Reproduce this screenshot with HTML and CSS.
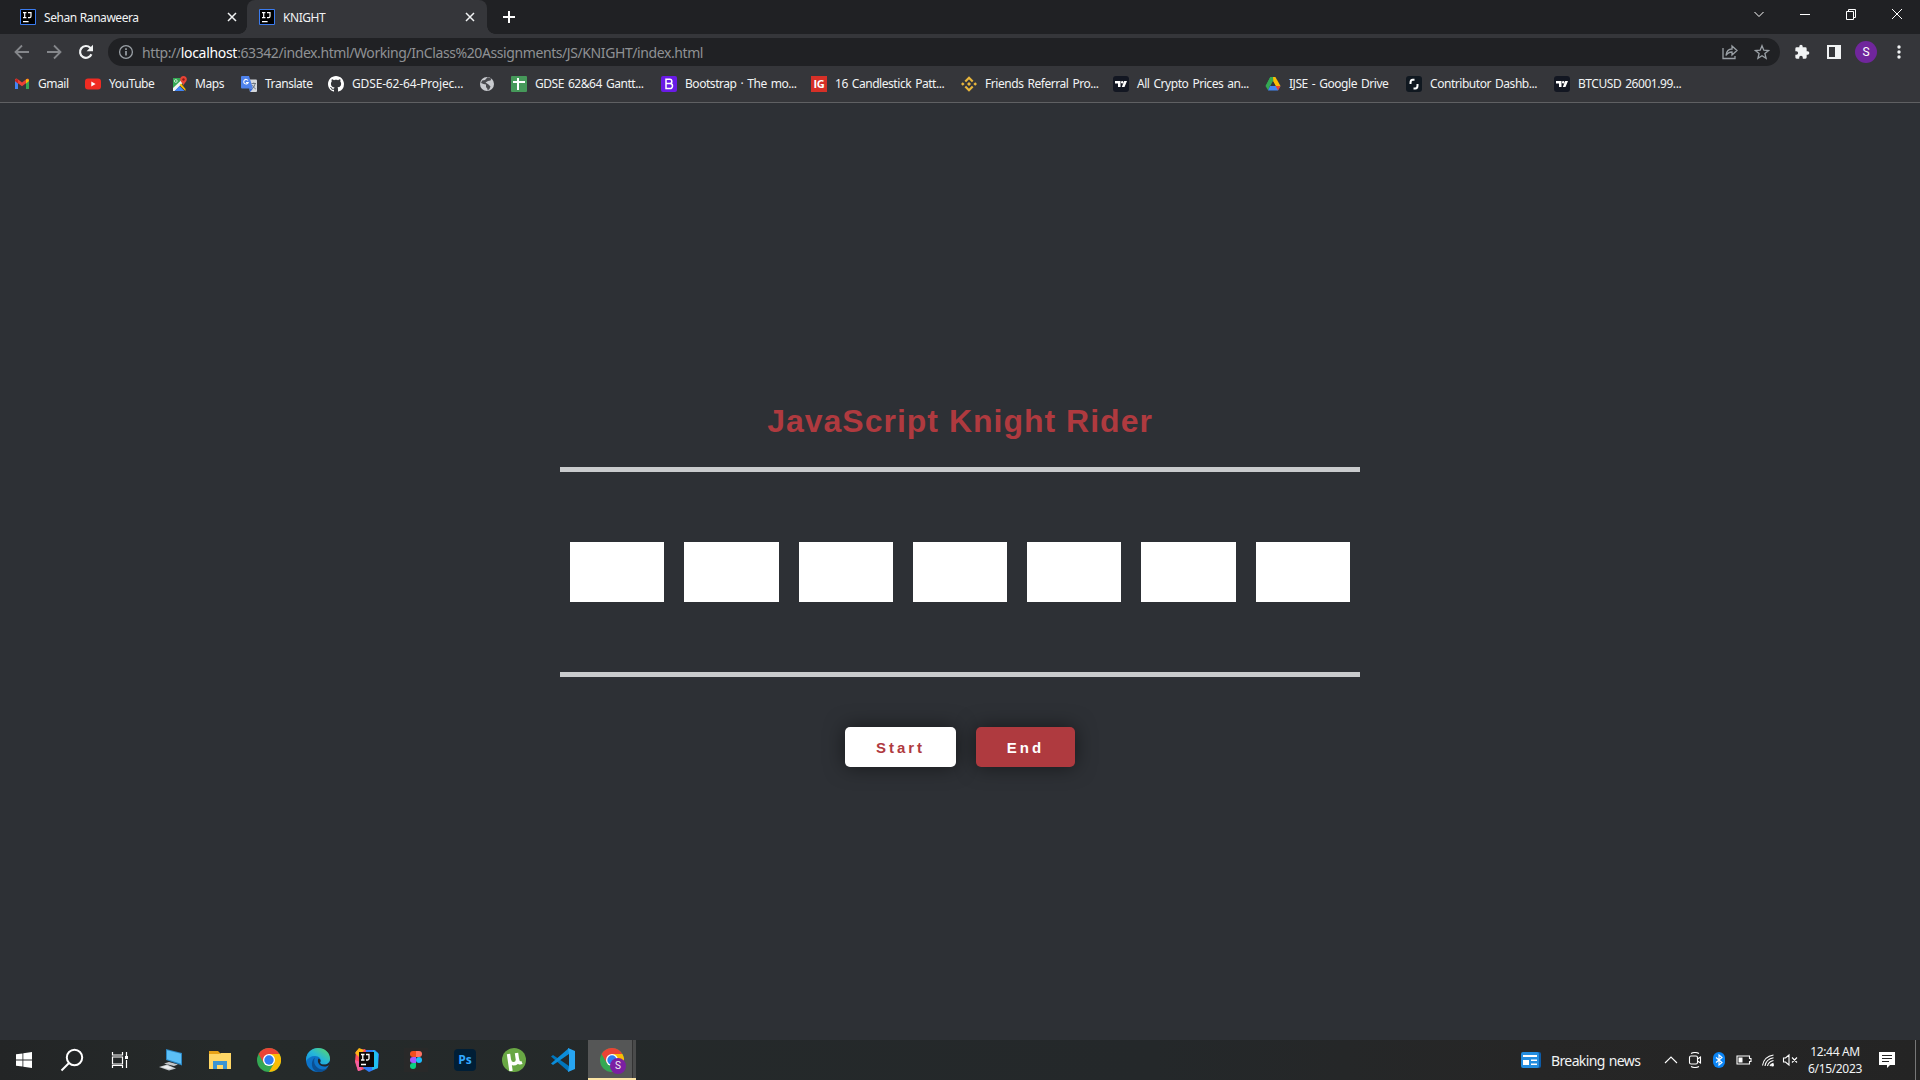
FILE: index.html
```html
<!DOCTYPE html>
<html lang="en">
<head>
<meta charset="utf-8">
<title>KNIGHT</title>
<link rel="stylesheet" href="styles.css">
</head>
<body>
<svg class="defs" width="0" height="0" aria-hidden="true">
  <symbol id="ij" viewBox="0 0 16 16"><path fill="#000" stroke="#3b7cf0" d="M.5.5h15v15H.5z"/><path fill="none" stroke="#fff" stroke-width="1.2" d="M3 3.6h3.4M4.700 3.600v5M3 8.600h3.400M8 3.600h3v3.600q0 1.400-1.400 1.400H8M3 12.600h5.600"/></symbol>
  <symbol id="x" viewBox="0 0 10 10"><path fill="none" stroke="#f1f3f4" stroke-width="1.5" d="M1 1l8 8M9 1L1 9"/></symbol>
  <symbol id="tv" viewBox="0 0 16 16"><rect width="16" height="16" rx="3" fill="#131722"/><path fill="#fff" d="M2 5h5.500v6H5V7.400H2zM11.200 5H14l-2.500 6H8.800z"/><circle cx="9.200" cy="6.200" r="1.200" fill="#fff"/></symbol>
  <symbol id="chrome" viewBox="0 0 24 24"><circle cx="12" cy="12" r="12" fill="#34a853"/><path fill="#ea4335" d="M1.600 6A12 12 0 0 1 22.400 6H12L6.800 15z"/><path fill="#fbbc05" d="M22.400 6A12 12 0 0 1 12 24l5.200-9L12 6z"/><circle cx="12" cy="12" r="6" fill="#fff"/><circle cx="12" cy="12" r="4.700" fill="#2f7cf0"/></symbol>
</svg>

<header class="browser">
  <div class="tabstrip">
    <div class="tab"><svg class="fav"><use href="#ij"/></svg><span class="tab-title">Sehan Ranaweera</span><svg class="tab-x"><use href="#x"/></svg></div>
    <div class="tab active"><svg class="fav"><use href="#ij"/></svg><span class="tab-title knight">KNIGHT</span><svg class="tab-x"><use href="#x"/></svg></div>
    <svg class="plus" viewBox="0 0 12 12"><path stroke="#fff" stroke-width="2" d="M6 0v12M0 6h12"/></svg>
    <div class="window">
      <svg viewBox="0 0 12 12"><path d="M1.500 4L6 8.500 10.500 4"/></svg>
      <svg viewBox="0 0 12 12"><path d="M1 6.500h10"/></svg>
      <svg viewBox="0 0 12 12"><path d="M1.500 3.500h7v8h-7zM3.500 3.500v-2h7v8h-2"/></svg>
      <svg viewBox="0 0 12 12"><path d="M1 1l10 10M11 1L1 11"/></svg>
    </div>
  </div>

  <div class="toolbar">
    <div class="nav">
      <svg class="dim" viewBox="0 0 16 16"><path d="M15 8H2M8 1.500L1.500 8 8 14.500"/></svg>
      <svg class="dim" viewBox="0 0 16 16"><path d="M1 8h13M8 1.500L14.500 8 8 14.500"/></svg>
      <svg viewBox="0 0 16 16"><path stroke-width="2.200" d="M13.400 10.200A5.900 5.900 0 1 1 12.200 3.800L14 5.600"/><path fill="#f1f3f4" stroke="none" d="M15 .8v6.400H8.600z"/></svg>
    </div>
    <div class="omnibox">
      <svg class="info" viewBox="0 0 16 16"><circle cx="8" cy="8" r="6.400"/><path stroke-width="1.700" d="M8 7v4.500M8 4.300V6"/></svg>
      <div class="url">http://<b>localhost</b>:63342/index.html/Working/InClass%20Assignments/JS/KNIGHT/index.html</div>
      <svg class="share" viewBox="0 0 16 16"><path d="M1 4v10.500h12V12M4 11.500C4.500 7 7 5 10 5V2L15 6.500 10 11V8C7.500 8 5.500 9 4 11.500z"/></svg>
      <svg class="star" viewBox="0 0 16 16"><path d="M8 1.700l1.800 4.500 4.800.3-3.700 3 1.200 4.800L8 11.700l-4.100 2.600 1.200-4.800-3.700-3 4.800-.3z"/></svg>
    </div>
    <div class="actions">
      <svg viewBox="0 0 24 24"><path fill="#f1f3f4" d="M20.500 11H19V7a2 2 0 0 0-2-2h-4V3.500a2.500 2.500 0 0 0-5 0V5H4a2 2 0 0 0-2 2v3.800h1.500a2.700 2.700 0 0 1 0 5.400H2V20a2 2 0 0 0 2 2h3.800v-1.500a2.700 2.700 0 0 1 5.400 0V22H17a2 2 0 0 0 2-2v-4h1.500a2.500 2.500 0 0 0 0-5z"/></svg>
      <svg viewBox="0 0 16 16"><path fill="#f1f3f4" fill-rule="evenodd" d="M1 1h14v14H1zM3 3v10h6V3z"/></svg>
      <span class="avatar">S</span>
      <svg viewBox="0 0 16 16"><g fill="#f1f3f4"><circle cx="8" cy="3" r="1.700"/><circle cx="8" cy="8" r="1.700"/><circle cx="8" cy="13" r="1.700"/></g></svg>
    </div>
  </div>

  <nav class="bookmarks">
    <a><svg viewBox="0 0 16 16"><path fill="#4285f4" d="M1 4v9h3V7z"/><path fill="#34a853" d="M15 4v9h-3V7z"/><path fill="#ea4335" d="M1 5V3.500Q2 2 3.500 3L8 6.500 12.500 3Q14 2 15 3.500V5l-7 5.200z"/><path fill="#fbbc04" d="M12 3.500L13 3q2 0 2 2l-3 2.500z"/><path fill="#c5221f" d="M4 3.500L3 3Q1 3 1 5l3 2.500z"/></svg><span>Gmail</span></a>
    <a><svg viewBox="0 0 16 16"><rect y="2.500" width="16" height="11" rx="3" fill="#f02b22"/><path fill="#fff" d="M6.300 5.500v5L10.600 8z"/></svg><span>YouTube</span></a>
    <a><svg viewBox="0 0 16 16"><path fill="#34a853" d="M2 2h8l2 6-10 7z"/><path fill="#f3f4f5" d="M2 12L10.500 4l1 3L4 15H2z"/><path fill="#fbbc04" d="M8.500 9.300l1.500-1.800L14.500 13v2z"/><path fill="#4285f4" d="M3.500 15l5-5 5 5z"/><path fill="#e94335" d="M12.500 0a3.300 3.300 0 0 1 3.300 3.600C15.800 6 13 7 12.500 10 12 7 9.200 6 9.200 3.600A3.300 3.300 0 0 1 12.500 0z"/><circle cx="12.500" cy="3.500" r="1.200" fill="#8b1a16"/><circle cx="4.800" cy="5" r="1.400" fill="none" stroke="#fff" stroke-width=".7"/></svg><span>Maps</span></a>
    <a><svg viewBox="0 0 16 16"><path fill="#d5d8dc" d="M7 3.500h8q1 0 1 1V15q0 1-1 1H9z"/><path fill="#4f83ed" d="M1 0h7l4 12.500H1q-1 0-1-1V1q0-1 1-1z"/><path fill="#3367d6" d="M8 12.500h4L9.300 16z"/><path fill="none" stroke="#fff" stroke-width="1.100" d="M7 4.500A2.300 2.300 0 1 0 7.200 6.500H5"/><path fill="none" stroke="#66717c" stroke-width=".9" d="M10.500 7.500H15M12.800 6.500v1M14.200 7.500Q13.500 11 11.500 12.500M11.500 9q1 3 3.300 4"/></svg><span>Translate</span></a>
    <a class="wide"><svg viewBox="0 0 16 16"><path fill="#fff" d="M8 0C3.580 0 0 3.580 0 8c0 3.540 2.290 6.530 5.470 7.590.4.070.55-.17.55-.38 0-.19-.01-.82-.01-1.490-2.010.37-2.530-.49-2.690-.94-.09-.23-.48-.94-.82-1.130-.28-.15-.68-.52-.01-.53.63-.01 1.080.58 1.230.82.72 1.210 1.870.87 2.330.66.07-.52.28-.87.51-1.070-1.780-.2-3.640-.89-3.640-3.950 0-.87.31-1.590.82-2.150-.08-.2-.36-1.020.08-2.120 0 0 .67-.21 2.200.82.64-.18 1.320-.27 2-.27s1.360.09 2 .27c1.530-1.040 2.200-.82 2.200-.82.44 1.100.16 1.920.08 2.120.51.56.82 1.270.82 2.150 0 3.070-1.870 3.750-3.650 3.950.29.25.54.73.54 1.480 0 1.070-.01 1.930-.01 2.200 0 .21.15.46.55.38A8.010 8.010 0 0 0 16 8c0-4.420-3.580-8-8-8z"/></svg><span>GDSE-62-64-Projec...</span></a>
    <a><svg viewBox="0 0 16 16"><circle cx="7" cy="8" r="7" fill="#c9cbcf"/><path fill="#4a4b4f" d="M7.500 1.200L5 4l-2.800.5L1 7l2.500 1 2.500.5V11l1.500 2V14.500l2-1.500 1-2.500-2-2L7 7.500 5.500 6.500 8 5l2.500-.5 1-2z"/></svg></a>
    <a><svg viewBox="0 0 16 16"><rect width="16" height="16" rx="1" fill="#46995a"/><path stroke="#fff" stroke-width="2" d="M2 6h12M7 2v12"/></svg><span>GDSE 62&amp;64 Gantt...</span></a>
    <a><svg viewBox="0 0 16 16"><rect width="16" height="16" rx="2" fill="#6a1be6"/><path fill="none" stroke="#fff" stroke-width="1.500" d="M5 3.300h3.700a2.100 2.100 0 0 1 0 4.300H5h4a2.500 2.500 0 0 1 0 5H5z"/></svg><span>Bootstrap · The mo...</span></a>
    <a><svg viewBox="0 0 16 16"><path fill="#d63027" d="M0 0h16v16H0z"/><text x="8" y="12" text-anchor="middle" class="ig">IG</text></svg><span>16 Candlestick Patt...</span></a>
    <a><svg viewBox="0 0 16 16"><g fill="none" stroke="#e9b63c" stroke-width="2.200"><path d="M4.300 5.500L8 1.800l3.700 3.700M4.300 10.500L8 14.200l3.700-3.700"/></g><path fill="#e9b63c" d="M8 6l2 2-2 2-2-2zM1.800 6.200L3.600 8 1.800 9.800 0 8zM14.200 6.200L16 8l-1.800 1.800L12.400 8z"/></svg><span>Friends Referral Pro...</span></a>
    <a><svg><use href="#tv"/></svg><span>All Crypto Prices an...</span></a>
    <a><svg viewBox="0 0 16 16"><path fill="#34a853" d="M5.300 1h2.800L3.200 14.500.5 10z"/><path fill="#fbbc04" d="M5.800 1h4.600l5.100 9h-4.800z"/><path fill="#34a853" d="M5.300 1H8l.3 3.500-3 5.500H.8z"/><path fill="#4285f4" d="M5 10h10.500L13 14.500H3z"/><path fill="#ea4335" d="M10.700 10h4.800L13 14.500z"/><path fill="#35363a" d="M8 5.500l2.500 4.500H5.500z"/></svg><span>IJSE - Google Drive</span></a>
    <a><svg viewBox="0 0 16 16"><rect width="16" height="16" rx="3" fill="#101820"/><path fill="none" stroke="#fff" stroke-width="2" d="M8.500 3.800H6.700Q4.500 3.800 4.500 7v1M7.500 12.500h1.800q2.200 0 2.200-3V8"/></svg><span>Contributor Dashb...</span></a>
    <a><svg><use href="#tv"/></svg><span>BTCUSD 26001.99...</span></a>
  </nav>
</header>

<main class="page">
  <h1>JavaScript Knight Rider</h1>
  <section class="lights">
    <div></div><div></div><div></div><div></div><div></div><div></div><div></div>
  </section>
  <div class="buttons"><button class="start">Start</button><button class="end">End</button></div>
</main>

<footer class="taskbar">
  <div class="system">
    <svg viewBox="0 0 24 24"><path fill="#fff" d="M4 6.300l6.500-.9v6.100H4zM11.300 5.300L20 4v7.500h-8.700zM4 12.400h6.500v6.200L4 17.700zM11.300 12.400H20V20l-8.700-1.200z"/></svg>
    <svg viewBox="0 0 24 24"><g fill="none" stroke="#fff" stroke-width="2"><circle cx="14.500" cy="9.500" r="7.700"/><path d="M9 15l-7.500 7.500"/></g></svg>
    <svg viewBox="0 0 24 24"><path fill="none" stroke="#fff" stroke-width="1.200" d="M4.500 4v3h10V4M4.500 9h10v7h-10zM4.500 20v-2.500h10V20M18.500 4v4M18.500 12v8"/><path fill="#fff" d="M17 8h3v3h-3z"/></svg>
  </div>
  <div class="apps">
    <span><svg viewBox="0 0 24 24"><path fill="#2c86c2" d="M7 1l16 4v12.500L7 12z"/><path fill="#5cc0f7" d="M8 2.300l14 3.500v10L8 11.200z"/><path fill="#c3c8cc" d="M5 15.500l5-1.500 9 2.500-4 1.500zM0 19l8-2.500 9 4-7 2z"/><path fill="#eceff1" d="M2 19l6-1.500 6 2.500-4.500 1z"/></svg></span>
    <span><svg viewBox="0 0 24 24"><path fill="#e8a317" d="M1 3h9l2 2v3H1z"/><path fill="#ffd766" d="M1 6h10l2-1h10v16H1z"/><path fill="#3a94d2" d="M5 13h14v8h-4v-4H9v4H5z"/></svg></span>
    <span><svg><use href="#chrome"/></svg></span>
    <span><svg viewBox="0 0 24 24"><defs><linearGradient id="eg" x1="0" y1="1" x2="1" y2="0"><stop stop-color="#108be0"/><stop offset=".5" stop-color="#26b7d8"/><stop offset="1" stop-color="#60dc5c"/></linearGradient></defs><circle cx="12" cy="12" r="12" fill="#0d73c8"/><path fill="url(#eg)" d="M0 11C1 4 6 0 12 0c7 0 12 5 12 10.500 0 4-3 6-6 6-3.500 0-4.500-1.500-3.500-3C15.500 11 13 8 9 8c-4 0-7 2-9 5z"/><path fill="#0b4f93" d="M9 9.500c-3 6 2 12 8 12 3 0 4.500-1 5.500-2.500C20 23 16 24 12 24 5 23 4 13 9 9.500z"/><path fill="#222529" d="M12.500 10.500c-2 3.500 1 8 6 8 2 0 3.500-.6 5-1.500l.5-4c-1.500 3-4 3.500-6 3.500-3.500 0-4.500-1.500-3.500-3 .5-1-.5-2.500-2-3z"/></svg></span>
    <span><svg viewBox="0 0 24 24"><path fill="#fc4d62" d="M1 3l9-2 4 6-4 14-7 2L0 14z"/><path fill="#fdb515" d="M4 0l5 2-5 7-4-4z"/><path fill="#2e7cf6" d="M11 2h9l4 4-1 14-9 4-6-4z"/><path fill="#20bff2" d="M18 2l5 3v15l-6 2z"/><path fill="#f25fa0" d="M0 12l5 2 2 8-4 1z"/><path fill="#0c0808" d="M4 4h15v15H4z"/><path fill="none" stroke="#fff" stroke-width="1.300" d="M6 6.500h3.500M7.800 6.500V12M6 12h3.500M11 6.500h3v4q0 1.500-1.500 1.500H11M6 16.500h5"/></svg></span>
    <span><svg viewBox="0 0 24 24"><path fill="#292929" d="M0 0h24v24H0z"/><path fill="#f24e1e" d="M12 3v6H9a3 3 0 0 1 0-6z"/><path fill="#ff7262" d="M12 3h3a3 3 0 0 1 0 6h-3z"/><path fill="#a259ff" d="M12 9v6H9a3 3 0 0 1 0-6z"/><circle cx="15" cy="12" r="3" fill="#1abcfe"/><path fill="#0acf83" d="M12 15v3a3 3 0 1 1-3-3z"/></svg></span>
    <span><svg viewBox="0 0 24 24"><rect x="1" y="1" width="22" height="22" rx="4" fill="#001e36"/><text x="12" y="16" text-anchor="middle" class="ps">Ps</text></svg></span>
    <span><svg viewBox="0 0 24 24"><circle cx="12" cy="12" r="12" fill="#69a744"/><path fill="none" stroke="#fff" stroke-width="3.400" d="M6.500 6l2.500 17M7.500 12c.5 5 7.500 5 8 0L14.500 5M15.500 11q.5 5 4.500 3.500"/></svg></span>
    <span><svg viewBox="0 0 24 24"><path fill="#0076bd" d="M0 8.500L2 7l16 11v6z"/><path fill="#0b8dda" d="M0 15.500L2 17 18 6V0z"/><path fill="#27a5f2" d="M17 0l7 3v18l-7 3 1-6V6z"/></svg></span>
    <span class="running"><svg><use href="#chrome"/></svg><i class="badge">S</i></span>
  </div>
  <div class="tray">
    <svg class="news" viewBox="0 0 20 16"><rect x="3" width="17" height="16" rx="2" fill="#0d5ca8"/><rect width="18" height="16" rx="2" fill="#238de0"/><path fill="#fff" d="M2 3h14v2H2zM2 8h6v5H2zM10 7.500h6V9h-6zM10 11.500h6V13h-6z"/></svg>
    <span class="headline">Breaking news</span>
    <svg class="t1" viewBox="0 0 16 16"><path d="M2 11l6-6 6 6"/></svg>
    <svg class="t2" viewBox="0 0 16 16"><rect x="2.500" y="4" width="8" height="8" rx="1.500"/><path d="M10.500 7l3-2v6l-3-2M4 1.500Q8-.5 12 1.500M4 14.500q4 2 8 0"/></svg>
    <svg class="t3" viewBox="0 0 16 16"><rect x="2" width="12" height="16" rx="6" fill="#0a84f5" stroke="none"/><path d="M5 5.500l6 5L8 13V3l3 2.500-6 5"/></svg>
    <svg class="t4" viewBox="0 0 16 16"><path d="M1 4h12.500v2.500h1.500v3h-1.500V12H1z"/><path fill="#fff" stroke="none" d="M2.500 5.500h4v5h-4z"/></svg>
    <svg class="t5" viewBox="0 0 16 16"><path d="M2.500 13.500Q4 4.500 13.500 3M5 14q1-7 8.500-8.300M7.500 14q1-4.500 6-5.500M10 14q.5-2 3.500-2.700"/><circle cx="12.500" cy="13" r="1.500" fill="#fff" stroke="none"/></svg>
    <svg class="t6" viewBox="0 0 16 16"><path d="M1.500 6h2L7 3v10l-3.500-3h-2zM10 5.500l5 5M15 5.500l-5 5"/></svg>
    <div class="clock"><span>12:44 AM</span><span>6/15/2023</span></div>
    <svg class="notes" viewBox="0 0 16 16"><path fill="#fff" stroke="none" d="M0 0h16v13h-5l-3 3v-3H0z"/><path stroke="#252525" d="M3 3.500h10M3 6.500h10M3 9.500h7"/></svg>
  </div>
</footer>
</body>
</html>
```
FILE: styles.css
```css
* { box-sizing: border-box; }
body {
  margin: 0;
  width: 1920px;
  height: 1080px;
  display: flex;
  flex-direction: column;
  overflow: hidden;
  background: #2d3035;
  font-family: "Noto Sans", "Open Sans", sans-serif;
  color: #f1f3f4;
}
svg { display: block; flex: none; }
.defs { position: absolute; }

/* Browser chrome */
.browser { height: 103px; background: #35363a; border-bottom: 1px solid #5f6063; }
.tabstrip { height: 34px; display: flex; align-items: center; background: #202124; padding-left: 8px; }
.tab { width: 239px; height: 34px; padding: 0 10px 0 12px; display: flex; align-items: center; font-size: 12px; }
.tab.active { width: 240px; padding-right: 12px; background: #35363a; border-radius: 8px 8px 0 0; position: relative; }
.tab.active::before, .tab.active::after { content: ""; position: absolute; bottom: 0; width: 8px; height: 8px; }
.tab.active::before { left: -8px; background: radial-gradient(circle at 0 0, #202124 7.5px, #35363a 8px); }
.tab.active::after { right: -8px; background: radial-gradient(circle at 100% 0, #202124 7.5px, #35363a 8px); }
.fav { width: 16px; height: 16px; }
.tab-title { flex: 1; margin-left: 8px; letter-spacing: -.45px; word-spacing: .5px; }
.knight { letter-spacing: -.45px; }
.tab-x { width: 10px; height: 10px; }
.plus { width: 12px; height: 12px; margin-left: 16px; }
.window { margin-left: auto; display: flex; gap: 34px; padding: 0 17px 6px 0; }
.window svg { width: 12px; height: 12px; fill: none; stroke: #fff; }

.toolbar { height: 36px; display: flex; align-items: center; }
.nav { width: 108px; flex: none; padding-left: 14px; display: flex; gap: 16px; }
.nav svg { width: 16px; height: 16px; fill: none; stroke: #f1f3f4; stroke-width: 1.8; }
.nav .dim { stroke: #85878b; }
.omnibox { width: 1672px; flex: none; height: 28px; border-radius: 14px; background: #202124; padding: 0 10px; display: flex; align-items: center; }
.omnibox svg { width: 16px; height: 16px; fill: none; stroke: #9aa0a6; stroke-width: 1.3; }
.url { flex: 1; margin-left: 8px; padding-top: 1px; font-size: 14px; line-height: 27px; letter-spacing: -.41px; color: #8f9194; }
.url b { font-weight: 400; color: #fff; letter-spacing: -.3px; }
.omnibox .share { margin-right: 16px; }
.actions { flex: 1; display: flex; align-items: center; padding-left: 14px; }
.actions svg { width: 16px; height: 16px; margin-right: 16px; }
.actions svg:last-child { margin-right: 0; }
.avatar { width: 22px; height: 22px; border-radius: 50%; background: #70269c; margin: 0 14px 0 -3px; text-align: center; font: 12px/22px Roboto, sans-serif; color: #fff; }

.bookmarks {
  height: 28px;
  padding-left: 14px;
  display: grid;
  align-items: center;
  grid-template-columns: 71px 86px 70px 87px 152px 31px 150px 150px 150px 152px 152px 141px 148px 148px;
  font-size: 12px;
}
.bookmarks a { display: flex; align-items: center; gap: 8px; white-space: nowrap; letter-spacing: -.45px; word-spacing: 1.3px; }
.bookmarks span { padding-bottom: 1px; line-height: 16px; }
.bookmarks .wide { letter-spacing: -.15px; }
.bookmarks svg { width: 16px; height: 16px; }
.ig { font: bold 11px "Open Sans", sans-serif; fill: #fff; letter-spacing: -.3px; }

/* Knight Rider page */
.page { flex: 1; padding-top: 300px; display: flex; flex-direction: column; align-items: center; font-family: "Liberation Sans", Arial, sans-serif; }
h1 { margin: 0; font-size: 32px; line-height: 36px; letter-spacing: 1px; color: #af3a3f; }
.lights { width: 800px; height: 210px; margin-top: 28px; border: solid #c9cbcd; border-width: 5px 0; display: flex; align-items: center; }
.lights div { flex: 1; height: 60px; margin: 0 10px; background: #fff; }
.buttons { display: flex; gap: 20px; margin-top: 50px; }
button { height: 40px; padding: 0; border: 0; border-radius: 5px; font: bold 15px "Liberation Sans", Arial, sans-serif; letter-spacing: 3px; box-shadow: 0 0 20px rgba(0, 0, 0, .5); }
.start { width: 111px; background: #fff; color: #af3a3f; }
.end { width: 99px; background: #af3a3f; color: #fff; }

/* Taskbar */
.taskbar { height: 40px; display: flex; background: linear-gradient(90deg, #232526, #252a2a 12%, #24282a 60%, #262626 80%, #242424); }
.system, .apps { display: flex; }
.system svg { width: 24px; height: 24px; margin: 8px 12px; }
.apps { padding-left: 2px; }
.apps > span { width: 49px; height: 40px; padding: 8px 0 0 13px; }
.apps svg { width: 24px; height: 24px; }
.ps { font: bold 12px "Open Sans", sans-serif; fill: #31a8ff; }
.apps .running { position: relative; width: 48px; margin-left: 1px; padding-left: 12px; background: linear-gradient(90deg, #555656 44px, #333 44px, #333 45px, #4a4b4b 45px); border-bottom: 2px solid #fde5a5; }
.badge { position: absolute; left: 22px; top: 18px; width: 16px; height: 16px; border-radius: 50%; background: #7b1fa2; font: 10px/16px Roboto, sans-serif; text-align: center; }
.tray { margin-left: auto; width: 399px; display: flex; align-items: center; border-right: 1px solid #777; margin-right: 4px; padding-left: 4px; }
.tray svg { width: 16px; height: 16px; fill: none; stroke: #fff; stroke-width: 1.1; }
.tray .news { width: 20px; stroke: none; }
.headline { width: 112px; margin-left: 10px; font-size: 14px; letter-spacing: -.62px; word-spacing: 1px; white-space: nowrap; }
.tray .t2, .tray .t3, .tray .t5 { margin-left: 8px; }
.tray .t4 { margin-left: 9px; }
.tray .t6 { margin-left: 6px; }
.clock { width: 70px; margin-left: 2px; display: flex; flex-direction: column; align-items: center; font-size: 12px; line-height: 17.5px; letter-spacing: -.35px; }
.notes { margin-left: 9px; }
```
